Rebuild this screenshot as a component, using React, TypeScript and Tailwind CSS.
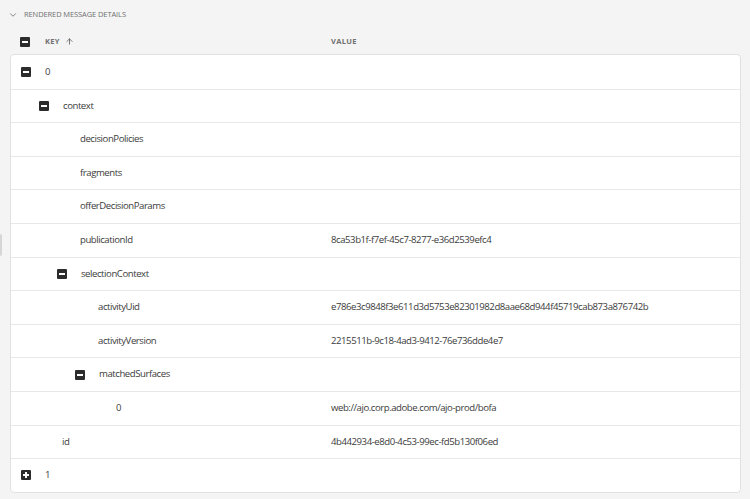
import { ChevronDown, ArrowUp } from "lucide-react";

type Row = {
  key: string;
  value?: string;
  level: number;
  toggle?: "minus" | "plus";
};

const rows: Row[] = [
  { key: "0", level: 0, toggle: "minus" },
  { key: "context", level: 1, toggle: "minus" },
  { key: "decisionPolicies", level: 2 },
  { key: "fragments", level: 2 },
  { key: "offerDecisionParams", level: 2 },
  { key: "publicationId", level: 2, value: "8ca53b1f-f7ef-45c7-8277-e36d2539efc4" },
  { key: "selectionContext", level: 2, toggle: "minus" },
  { key: "activityUid", level: 3, value: "e786e3c9848f3e611d3d5753e82301982d8aae68d944f45719cab873a876742b" },
  { key: "activityVersion", level: 3, value: "2215511b-9c18-4ad3-9412-76e736dde4e7" },
  { key: "matchedSurfaces", level: 3, toggle: "minus" },
  { key: "0", level: 4, value: "web://ajo.corp.adobe.com/ajo-prod/bofa" },
  { key: "id", level: 1, value: "4b442934-e8d0-4c53-99ec-fd5b130f06ed" },
  { key: "1", level: 0, toggle: "plus" },
];

// toggle box left offset per nesting level
const toggleIndent = ["pl-[10px]", "pl-[28px]", "pl-[46px]", "pl-[64px]", "pl-[82px]"];
// text left offset for leaf rows
const textIndent = ["pl-[34px]", "pl-[52px]", "pl-[70px]", "pl-[88px]", "pl-[106px]"];

function Toggle({ kind }: { kind: "minus" | "plus" }) {
  return (
    <span className="relative flex h-[10px] w-[10px] shrink-0 items-center justify-center rounded-[1px] bg-[#2c2c2c]">
      <span className="h-[2px] w-[6px] bg-white" />
      {kind === "plus" && <span className="absolute h-[6px] w-[2px] bg-white" />}
    </span>
  );
}

export default function App() {
  return (
    <div
      className="relative h-[499px] w-[750px] overflow-hidden bg-[#f4f4f4] text-[#3c3c3c]"
      style={{ fontFamily: '"Open Sans", "Noto Sans", sans-serif' }}
    >
      <div className="flex h-[29px] items-center gap-[6px] pl-[8px] pt-[1px]">
        <ChevronDown className="h-[10px] w-[10px] text-[#6e6e6e]" strokeWidth={2} />
        <span className="text-[7.5px] tracking-[-0.1px] text-[#707070]">RENDERED MESSAGE DETAILS</span>
      </div>

      <div className="flex h-[25px] items-center">
        <div className="flex w-[331px] items-center pl-[20px]">
          <Toggle kind="minus" />
          <span className="ml-[15px] text-[7.5px] font-bold tracking-[0.3px] text-[#707070]">KEY</span>
          <ArrowUp className="ml-[5px] h-[9px] w-[9px] text-[#707070]" strokeWidth={2.5} />
        </div>
        <span className="text-[7.5px] font-bold tracking-[0.3px] text-[#707070]">VALUE</span>
      </div>

      <div className="ml-[10px] w-[731px] overflow-hidden rounded-[4px] border border-[#e1e1e1] bg-white">
        {rows.map((r, i) => (
          <div
            key={i}
            className={`flex h-[33.6px] items-center text-[9.6px] tracking-[-0.45px] ${
              i > 0 ? "border-t border-[#e8e8e8]" : ""
            }`}
          >
            <div
              className={`flex w-[320px] shrink-0 items-center ${
                r.toggle ? toggleIndent[r.level] : textIndent[r.level]
              }`}
            >
              {r.toggle && <Toggle kind={r.toggle} />}
              <span className={r.toggle ? "ml-[14px]" : "-ml-[1px]"}>{r.key}</span>
            </div>
            {r.value && <span>{r.value}</span>}
          </div>
        ))}
      </div>

      <div className="absolute left-0 top-[234px] h-[22px] w-[2px] rounded-r bg-[#d6d6d6]" />
    </div>
  );
}
